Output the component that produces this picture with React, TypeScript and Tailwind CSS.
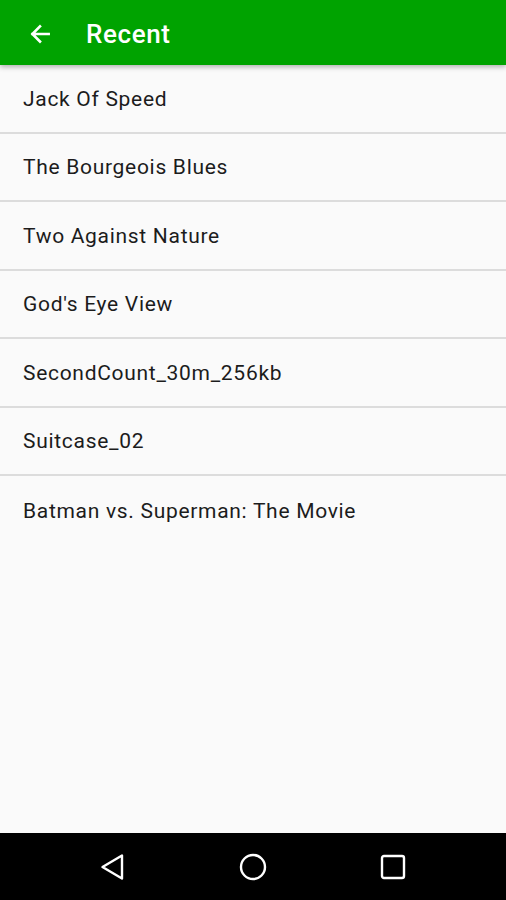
import React from 'react';

const items = [
    'Jack Of Speed',
    'The Bourgeois Blues',
    'Two Against Nature',
    "God's Eye View",
    'SecondCount_30m_256kb',
    'Suitcase_02',
    'Batman vs. Superman: The Movie',
];

const App: React.FC = () => {
    return (
        <div className="h-[900px] w-[506px] flex flex-col bg-[#fafafa] font-['Roboto',sans-serif] overflow-hidden">
            {/* Toolbar */}
            <div className="relative z-10 h-[65px] shrink-0 flex items-center bg-[#00a300] shadow-[0_2px_5px_rgba(0,0,0,0.3)]">
                <div className="w-[86px] flex items-center pl-[27px] pt-[2px]">
                    <svg width="26" height="26" viewBox="0 0 24 24" fill="none" stroke="white" strokeWidth="2.4" strokeLinecap="square">
                        <path d="M20 12H5M12 5l-7 7 7 7" />
                    </svg>
                </div>
                <h1 className="text-white text-[26px] tracking-[0.6px] font-medium leading-none pt-[3px]">Recent</h1>
            </div>

            {/* List */}
            <div className="flex-1 flex flex-col">
                {items.map((item, i) => (
                    <div
                        key={item}
                        className={`h-[68.5px] shrink-0 flex items-center pl-[23px] pt-[2px] ${i < items.length - 1 ? 'border-b-2 border-[#dcdcdc]' : ''}`}
                    >
                        <span className="text-[21px] tracking-[0.7px] text-[#1c1c1c]">{item}</span>
                    </div>
                ))}
            </div>

            {/* Nav bar */}
            <div className="h-[67px] shrink-0 bg-black flex items-center justify-center">
                <div className="w-[140px] flex justify-center">
                    <svg width="28" height="30" viewBox="0 0 28 30" fill="none" stroke="white" strokeWidth="2.4" strokeLinejoin="round">
                        <path d="M23 3.5V26.5L3.5 15Z" />
                    </svg>
                </div>
                <div className="w-[140px] flex justify-center">
                    <svg width="30" height="30" viewBox="0 0 30 30" fill="none" stroke="white" strokeWidth="2.4">
                        <circle cx="15" cy="15" r="12" />
                    </svg>
                </div>
                <div className="w-[140px] flex justify-center">
                    <svg width="26" height="26" viewBox="0 0 26 26" fill="none" stroke="white" strokeWidth="2.4">
                        <rect x="2" y="2" width="22" height="22" rx="2" />
                    </svg>
                </div>
            </div>
        </div>
    );
};

export default App;
